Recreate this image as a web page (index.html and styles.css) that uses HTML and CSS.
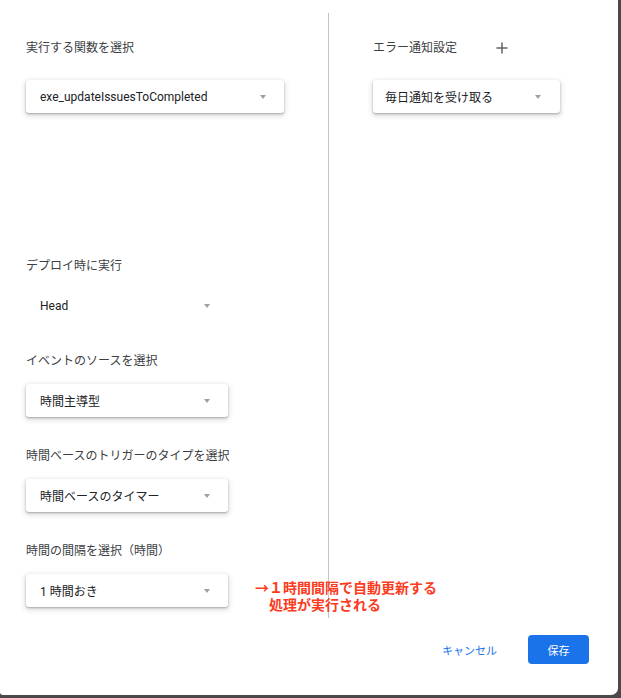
FILE: index.html
```html
<!DOCTYPE html>
<html lang="ja">
<head>
<meta charset="utf-8">
<link rel="stylesheet" href="styles.css">
</head>
<body>
<div class="dialog">
  <div class="main">
    <div class="col-left">
      <div class="label first">実行する関数を選択</div>
      <div class="select wide"><span>exe_updateIssuesToCompleted</span><i class="arrow"></i></div>

      <div class="label deploy">デプロイ時に実行</div>
      <div class="select flat"><span>Head</span><i class="arrow"></i></div>

      <div class="label">イベントのソースを選択</div>
      <div class="select"><span>時間主導型</span><i class="arrow"></i></div>

      <div class="label">時間ベースのトリガーのタイプを選択</div>
      <div class="select"><span>時間ベースのタイマー</span><i class="arrow"></i></div>

      <div class="label">時間の間隔を選択（時間）</div>
      <div class="last-row">
        <div class="select"><span>1 時間おき</span><i class="arrow"></i></div>
        <div class="note">→１時間間隔で自動更新する<br>　処理が実行される</div>
      </div>
    </div>
    <div class="col-right">
      <div class="label first head-row">エラー通知設定
        <svg class="plus" width="12" height="12" viewBox="0 0 12 12"><path d="M6 0.5v11M0.5 6h11" stroke="#5f6368" stroke-width="1.5" fill="none"/></svg>
      </div>
      <div class="select narrow"><span>毎日通知を受け取る</span><i class="arrow"></i></div>
    </div>
  </div>
  <div class="footer">
    <button class="btn-text">キャンセル</button>
    <button class="btn-primary">保存</button>
  </div>
</div>
</body>
</html>
```

FILE: styles.css
```css
html, body {
  margin: 0;
  padding: 0;
}
body {
  background: #4a4a4a;
  width: 621px;
  height: 698px;
  overflow: hidden;
  font-family: Roboto, "Noto Sans CJK JP", sans-serif;
}
.dialog {
  width: 618px;
  height: 695px;
  background: #fff;
  border-bottom-right-radius: 7px;
  border-bottom-left-radius: 3px;
  display: flex;
  flex-direction: column;
}
.main {
  display: flex;
  margin-top: 13px;
  height: 605px;
}
.col-left {
  width: 329px;
  flex-shrink: 0;
  padding-left: 26px;
  box-sizing: border-box;
  border-right: 1px solid #c4c4c4;
}
.col-right {
  padding-left: 44px;
}
.label {
  font-size: 12px;
  line-height: 16px;
  height: 16px;
  color: #3c4043;
  margin-top: 31px;
  margin-bottom: 15px;
  white-space: nowrap;
}
.label.first {
  margin-top: 27px;
  margin-bottom: 24px;
}
.label.deploy {
  margin-top: 145px;
}
.head-row {
  display: flex;
  align-items: center;
}
.plus {
  margin-left: 39px;
}
.select {
  width: 202px;
  height: 33px;
  flex-shrink: 0;
  box-sizing: border-box;
  padding: 0 18px 0 14px;
  display: flex;
  align-items: center;
  justify-content: space-between;
  background: #fff;
  border-radius: 3px;
  box-shadow: 0 1px 2px rgba(60,64,67,.35), 0 2px 5px 1px rgba(60,64,67,.18);
  font-size: 12px;
  color: #202124;
  white-space: nowrap;
}
.select.wide {
  width: 258px;
}
.select.narrow {
  width: 187px;
  padding-left: 12px;
  padding-right: 19px;
}
.select.flat {
  box-shadow: none;
}
.arrow {
  width: 0;
  height: 0;
  border-left: 3.5px solid transparent;
  border-right: 3.5px solid transparent;
  border-top: 4px solid #a0a0a0;
}
.last-row {
  display: flex;
  align-items: flex-start;
}
.note {
  margin-left: 27px;
  margin-top: 6px;
  font-size: 14px;
  line-height: 17px;
  font-weight: 700;
  color: #fb3b1d;
  white-space: nowrap;
  position: relative;
  z-index: 1;
}
.footer {
  display: flex;
  justify-content: flex-end;
  align-items: center;
  margin-top: 17px;
  padding-right: 29px;
  gap: 17px;
}
button {
  font-family: Roboto, "Noto Sans CJK JP", sans-serif;
  font-size: 11px;
  border: none;
  cursor: pointer;
}
.btn-text {
  background: transparent;
  color: #1a73e8;
  padding: 0 14px;
  height: 29px;
}
.btn-primary {
  background: #1a73e8;
  color: #fff;
  width: 61px;
  height: 29px;
  border-radius: 4px;
}
```
